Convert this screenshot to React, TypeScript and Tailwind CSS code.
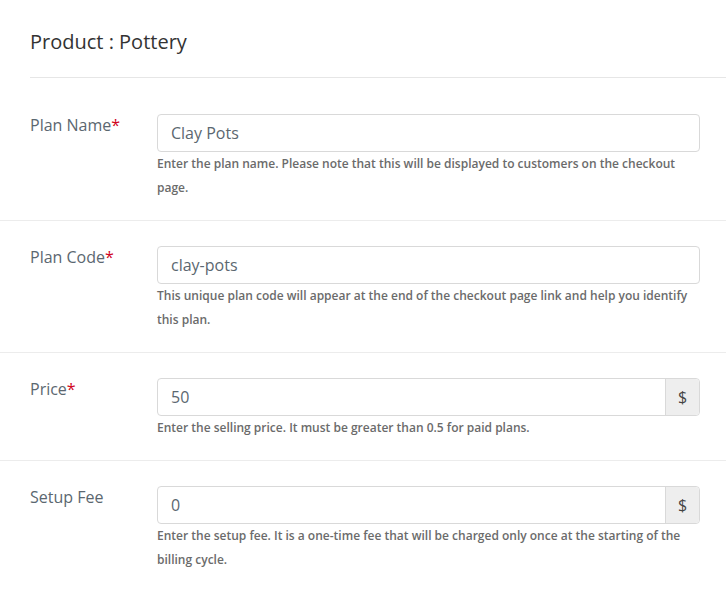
import React from "react";

const font = { fontFamily: '"Open Sans", "Liberation Sans", sans-serif' };

function Row({
  label,
  required,
  value,
  addon,
  help,
  first,
  last,
}: {
  label: string;
  required?: boolean;
  value: string;
  addon?: string;
  help: string;
  first?: boolean;
  last?: boolean;
}) {
  return (
    <div
      className={`flex pl-[15px] pr-[26px] pb-[20px] ${
        first ? "pt-[36px]" : "pt-[25px]"
      } ${last ? "" : "border-b border-[#ececec]"}`}
    >
      <div className="w-[142px] shrink-0 pl-[15px] text-[16px] leading-[22px] text-[#5b6770]">
        {label}
        {required && <span className="text-[#d0021b]">*</span>}
      </div>
      <div className="flex-1">
        <div className="flex h-[38px] rounded-[4px] border border-[#d9d9d9] bg-white">
          <div className="flex flex-1 items-center pl-[13px] text-[16px] text-[#5b6770]">
            {value}
          </div>
          {addon && (
            <div className="flex w-[34px] items-center justify-center rounded-r-[4px] border-l border-[#d9d9d9] bg-[#eeeeee] text-[16px] text-[#444]">
              {addon}
            </div>
          )}
        </div>
        <div className="text-[12px] font-semibold leading-[24px] text-[#6b6b6b]">
          {help}
        </div>
      </div>
    </div>
  );
}

export default function App() {
  return (
    <div className="min-h-[590px] w-[726px] bg-white" style={font}>
      <div className="pl-[30px]">
        <div className="border-b border-[#e6e6e6] pt-[28px] pb-[21px] text-[20px] leading-[28px] text-[#333]">
          Product : Pottery
        </div>
      </div>
      <Row
        first
        label="Plan Name"
        required
        value="Clay Pots"
        help="Enter the plan name. Please note that this will be displayed to customers on the checkout page."
      />
      <Row
        label="Plan Code"
        required
        value="clay-pots"
        help="This unique plan code will appear at the end of the checkout page link and help you identify this plan."
      />
      <Row
        label="Price"
        required
        value="50"
        addon="$"
        help="Enter the selling price. It must be greater than 0.5 for paid plans."
      />
      <Row
        last
        label="Setup Fee"
        value="0"
        addon="$"
        help="Enter the setup fee. It is a one-time fee that will be charged only once at the starting of the billing cycle."
      />
    </div>
  );
}
